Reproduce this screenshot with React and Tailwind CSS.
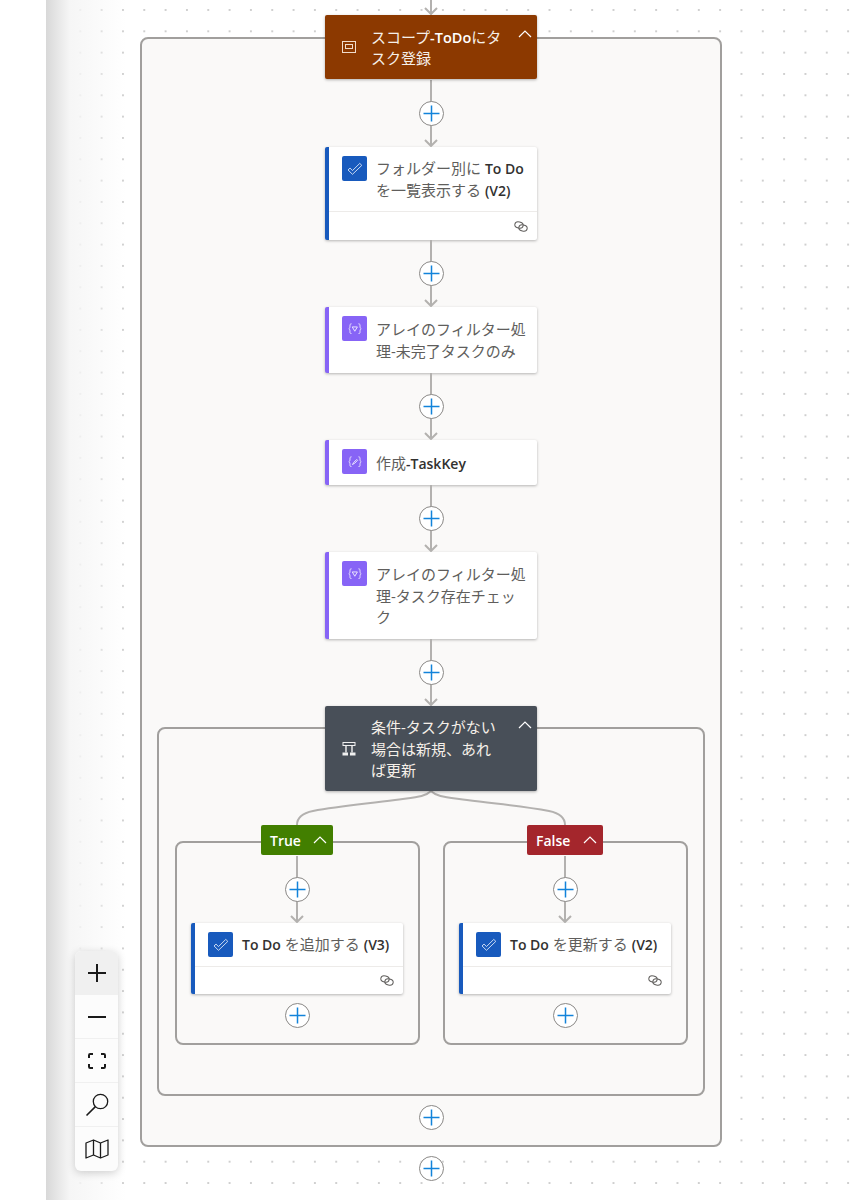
const FONT = "font-['Open_Sans','Noto_Sans_CJK_JP',sans-serif]";

function Latin({ children }) {
    return <span className="font-semibold text-[14px] text-[#323130]">{children}</span>;
}

function PlusButton() {
    return (
        <button className="w-[25px] h-[25px] rounded-full bg-white border border-[#8a8886] flex items-center justify-center shrink-0 z-10">
            <svg width="17" height="17" viewBox="0 0 17 17" fill="none" stroke="#1283da" strokeWidth="1.5">
                <path d="M8.5 0.5V16.5M0.5 8.5H16.5" />
            </svg>
        </button>
    );
}

function Connector({ className = "" }) {
    return (
        <div className={`relative w-[26px] h-[67px] flex items-center justify-center shrink-0 ${className}`}>
            <svg className="absolute inset-0" width="26" height="67" viewBox="0 0 26 67" fill="none" stroke="#b3b1af" strokeWidth="2">
                <path d="M13 0V66" />
                <path d="M7 60L13 66L19 60" />
            </svg>
            <PlusButton />
        </div>
    );
}

function TodoIcon() {
    return (
        <div className="w-[25px] h-[25px] rounded-[2px] bg-[#185abd] flex items-center justify-center shrink-0">
            <svg width="16" height="14" viewBox="0 0 17 15" fill="none" stroke="#d5e2f5" strokeWidth="1" strokeLinejoin="round">
                <path d="M1 8.5L3.2 6.5L5.8 9.2L13.6 1.5L15.8 3.6L5.8 13.2Z" />
            </svg>
        </div>
    );
}

function DataIcon({ kind }) {
    return (
        <div className="w-[25px] h-[25px] rounded-[2px] bg-[#8764f6] flex items-center justify-center shrink-0">
            <svg width="14" height="11.5" viewBox="0 0 17 14" fill="none" stroke="#ebe5fd" strokeWidth="1.2" strokeLinecap="round">
                <path d="M3.8 1C2.4 1 2.4 2 2.4 3.4C2.4 5.4 2.2 6.4 1 7C2.2 7.6 2.4 8.6 2.4 10.6C2.4 12 2.4 13 3.8 13" />
                <path d="M13.2 1C14.6 1 14.6 2 14.6 3.4C14.6 5.4 14.8 6.4 16 7C14.8 7.6 14.6 8.6 14.6 10.6C14.6 12 14.6 13 13.2 13" />
                {kind === "filter"
                    ? <path d="M5.6 4.8H11.4L8.5 9.6Z" strokeLinejoin="round" />
                    : <path d="M5.8 10L7 7.8L10.6 4.2L11.6 5.2L8.2 8.8L5.8 10Z" strokeLinejoin="round" />}
            </svg>
        </div>
    );
}

function LinkIcon() {
    return (
        <svg width="14" height="11" viewBox="0 0 14 11" fill="none" stroke="#605e5c" strokeWidth="1">
            <ellipse cx="5" cy="4" rx="4.2" ry="3" transform="rotate(12 5 4)" />
            <ellipse cx="9" cy="7" rx="4.2" ry="3" transform="rotate(12 9 7)" />
        </svg>
    );
}

function Chevron({ color = "#ffffff" }) {
    return (
        <svg width="14" height="8" viewBox="0 0 14 8" fill="none" stroke={color} strokeWidth="1.2">
            <path d="M1 7L7 1L13 7" />
        </svg>
    );
}

function ActionCard({ icon, accent, top, footer, foot = "h-[29px]", textPad = "", children }) {
    return (
        <div className={`w-[212px] bg-white rounded-[2px] shadow-[0_1px_3px_rgba(0,0,0,0.28)] border-l-[4px] ${accent} shrink-0`}>
            <div className={`flex items-start pl-[13px] pr-2 gap-[9px] pt-[11px] ${top}`}>
                <div className="-mt-[2px]">{icon}</div>
                <div className={`text-[15px] leading-[21.5px] text-[#605e5c] whitespace-nowrap ${textPad}`}>{children}</div>
            </div>
            {footer && (
                <div className={`${foot} border-t border-[#edebe9] flex items-center justify-end pr-[9px]`}>
                    <LinkIcon />
                </div>
            )}
        </div>
    );
}

function Header({ bg, icon, height, margin, children }) {
    return (
        <div className={`relative w-[212px] ${height} ${margin} ${bg} rounded-[2px] shadow-[0_1px_3px_rgba(0,0,0,0.3)] flex items-center pl-[16px] shrink-0 z-10`}>
            <div className="w-[16px] flex justify-center">{icon}</div>
            <div className="ml-[14px] pt-[2px] text-[15px] leading-[21.5px] text-[#f5efe9] whitespace-nowrap">{children}</div>
            <div className="absolute right-[5px] top-[15px]"><Chevron /></div>
        </div>
    );
}

function Branch({ label, bg, pill, title }) {
    return (
        <div className="w-[245px] border-2 border-[#a19f9d] rounded-lg flex flex-col items-center pb-[15px]">
            <div className={`${pill} h-[30px] -mt-[18px] ${bg} rounded-[2px] flex items-center justify-between pl-[9px] pr-[6px] text-[14px] font-semibold text-white z-10 shrink-0`}>
                <span>{label}</span>
                <Chevron />
            </div>
            <Connector className="mt-px" />
            <ActionCard icon={<TodoIcon />} accent="border-[#185abd]" top="h-[43px]" foot="h-[28px]" footer>
                {title}
            </ActionCard>
            <div className="mt-[9px]"><PlusButton /></div>
        </div>
    );
}

function ZoomPanel() {
    const cell = "h-[44px] flex items-center justify-center border-b border-[#f0f0f0] last:border-b-0";
    return (
        <div className="absolute left-[29px] top-[951px] w-[43px] bg-[#fcfcfc] rounded-md shadow-[0_2px_8px_rgba(0,0,0,0.18)] overflow-hidden z-20">
            <div className={`${cell} bg-[#f0f0f0]`}>
                <svg width="18" height="18" viewBox="0 0 18 18" stroke="#1a1a1a" strokeWidth="2"><path d="M9 0V18M0 9H18" /></svg>
            </div>
            <div className={cell}>
                <svg width="18" height="18" viewBox="0 0 18 18" stroke="#1a1a1a" strokeWidth="2"><path d="M0 9H18" /></svg>
            </div>
            <div className={cell}>
                <svg width="18" height="16" viewBox="0 0 18 16" fill="none" stroke="#1a1a1a" strokeWidth="2">
                    <path d="M1 5V2.2Q1 1 2.2 1H5M13 1H15.8Q17 1 17 2.2V5M17 11V13.8Q17 15 15.8 15H13M5 15H2.2Q1 15 1 13.8V11" />
                </svg>
            </div>
            <div className={cell}>
                <svg width="24" height="24" viewBox="0 0 24 24" fill="none" stroke="#1a1a1a" strokeWidth="1.3">
                    <circle cx="15.5" cy="8.5" r="7.2" />
                    <path d="M10.4 13.6L1.5 22.5" strokeWidth="1.6" />
                </svg>
            </div>
            <div className={cell}>
                <svg width="24" height="20" viewBox="0 0 24 20" fill="none" stroke="#1a1a1a" strokeWidth="1.3" strokeLinejoin="round">
                    <path d="M1 4L8.5 1L15.5 4L23 1V16L15.5 19L8.5 16L1 19Z" />
                    <path d="M8.5 1V16M15.5 4V19" />
                </svg>
            </div>
        </div>
    );
}

export default function App() {
    return (
        <div className={`w-[862px] h-[1200px] overflow-hidden bg-white flex ${FONT}`}>
            <div className="w-[46px] shrink-0" />
            <div className="relative flex-1 bg-[radial-gradient(circle,#cfcfcf_0.8px,transparent_1.2px)] bg-[size:21.33px_21.33px] bg-[position:2.3px_-0.7px]">
                <div className="absolute inset-y-0 left-0 w-[80px] bg-gradient-to-r from-[#d8d8d8] via-[#f6f6f6] via-30% to-transparent" />
                <ZoomPanel />

                <div className="relative ml-[94px] w-[582px] flex flex-col items-center">
                    <div className="mt-[37px] w-full bg-[#faf9f8] border-2 border-[#a19f9d] rounded-lg flex flex-col items-center pb-[15px]">
                        <div className="relative -mt-[24px] flex flex-col items-center">
                            <svg className="absolute -top-[15px] left-1/2 -translate-x-1/2" width="26" height="15" viewBox="0 0 26 15" fill="none" stroke="#b3b1af" strokeWidth="2">
                                <path d="M13 0V14" />
                                <path d="M7 8L13 14L19 8" />
                            </svg>
                            <Header
                                bg="bg-[#8c3900]"
                                height="h-[64px]"
                                margin=""
                                icon={
                                    <svg width="14" height="12" viewBox="0 0 14 12" fill="none" stroke="#f0dccb" strokeWidth="1">
                                        <rect x="0.5" y="0.5" width="13" height="11" />
                                        <rect x="3.5" y="3.5" width="7" height="4" />
                                    </svg>
                                }
                            >
                                スコープ<span className="font-semibold text-[14.5px] text-white">-ToDo</span>にタ<br />スク登録
                            </Header>
                        </div>
                        <Connector className="mt-px" />
                        <ActionCard icon={<TodoIcon />} accent="border-[#185abd]" top="h-[64px]" footer>
                            フォルダー別に <Latin>To Do</Latin><br />を一覧表示する <Latin>(V2)</Latin>
                        </ActionCard>
                        <Connector />
                        <ActionCard icon={<DataIcon kind="filter" />} accent="border-[#8764f6]" top="h-[66px]" textPad="pt-px">
                            アレイのフィルター処<br />理-未完了タスクのみ
                        </ActionCard>
                        <Connector />
                        <ActionCard icon={<DataIcon kind="compose" />} accent="border-[#8764f6]" top="h-[45px]" textPad="pt-[1.5px]">
                            作成<Latin>-TaskKey</Latin>
                        </ActionCard>
                        <Connector />
                        <ActionCard icon={<DataIcon kind="filter" />} accent="border-[#8764f6]" top="h-[87px]" textPad="pt-px">
                            アレイのフィルター処<br />理-タスク存在チェッ<br />ク
                        </ActionCard>
                        <Connector />

                        <div className="mt-[21px] w-[548px] border-2 border-[#a19f9d] rounded-lg flex flex-col items-center pb-[49px]">
                            <Header
                                bg="bg-[#484f58]"
                                height="h-[85px]"
                                margin="-mt-[23px]"
                                icon={
                                    <svg width="16" height="14" viewBox="0 0 16 14" fill="none" stroke="#f0f0f0" strokeWidth="1">
                                        <rect x="2" y="0.5" width="12" height="3" />
                                        <path d="M5 3.5V10.5M11 3.5V10.5" strokeWidth="1.4" />
                                        <path d="M1.5 10.5H7V13.5H1.5ZM9 10.5H14.5V13.5H9Z" fill="#f0f0f0" stroke="none" />
                                    </svg>
                                }
                            >
                                条件-タスクがない<br />場合は新規、あれ<br />ば更新
                            </Header>
                            <svg className="shrink-0" width="272" height="34" viewBox="0 0 272 34" fill="none" stroke="#b3b1af" strokeWidth="2">
                                <path d="M136 0C130 6 122 6 100 9C70 13 45 15 18 20C8 22 2 26 2 34" />
                                <path d="M136 0C142 6 150 6 172 9C202 13 227 15 254 20C264 22 270 26 270 34" />
                            </svg>
                            <div className="flex gap-[23px] mt-[16px]">
                                <Branch label="True" bg="bg-[#427f00]" pill="w-[72px]" title={<><Latin>To Do</Latin> を追加する <Latin>(V3)</Latin></>} />
                                <Branch label="False" bg="bg-[#a4262c]" pill="w-[76px]" title={<><Latin>To Do</Latin> を更新する <Latin>(V2)</Latin></>} />
                            </div>
                        </div>

                        <div className="mt-[9px]"><PlusButton /></div>
                    </div>
                    <div className="mt-[9px]"><PlusButton /></div>
                </div>
            </div>
        </div>
    );
}
